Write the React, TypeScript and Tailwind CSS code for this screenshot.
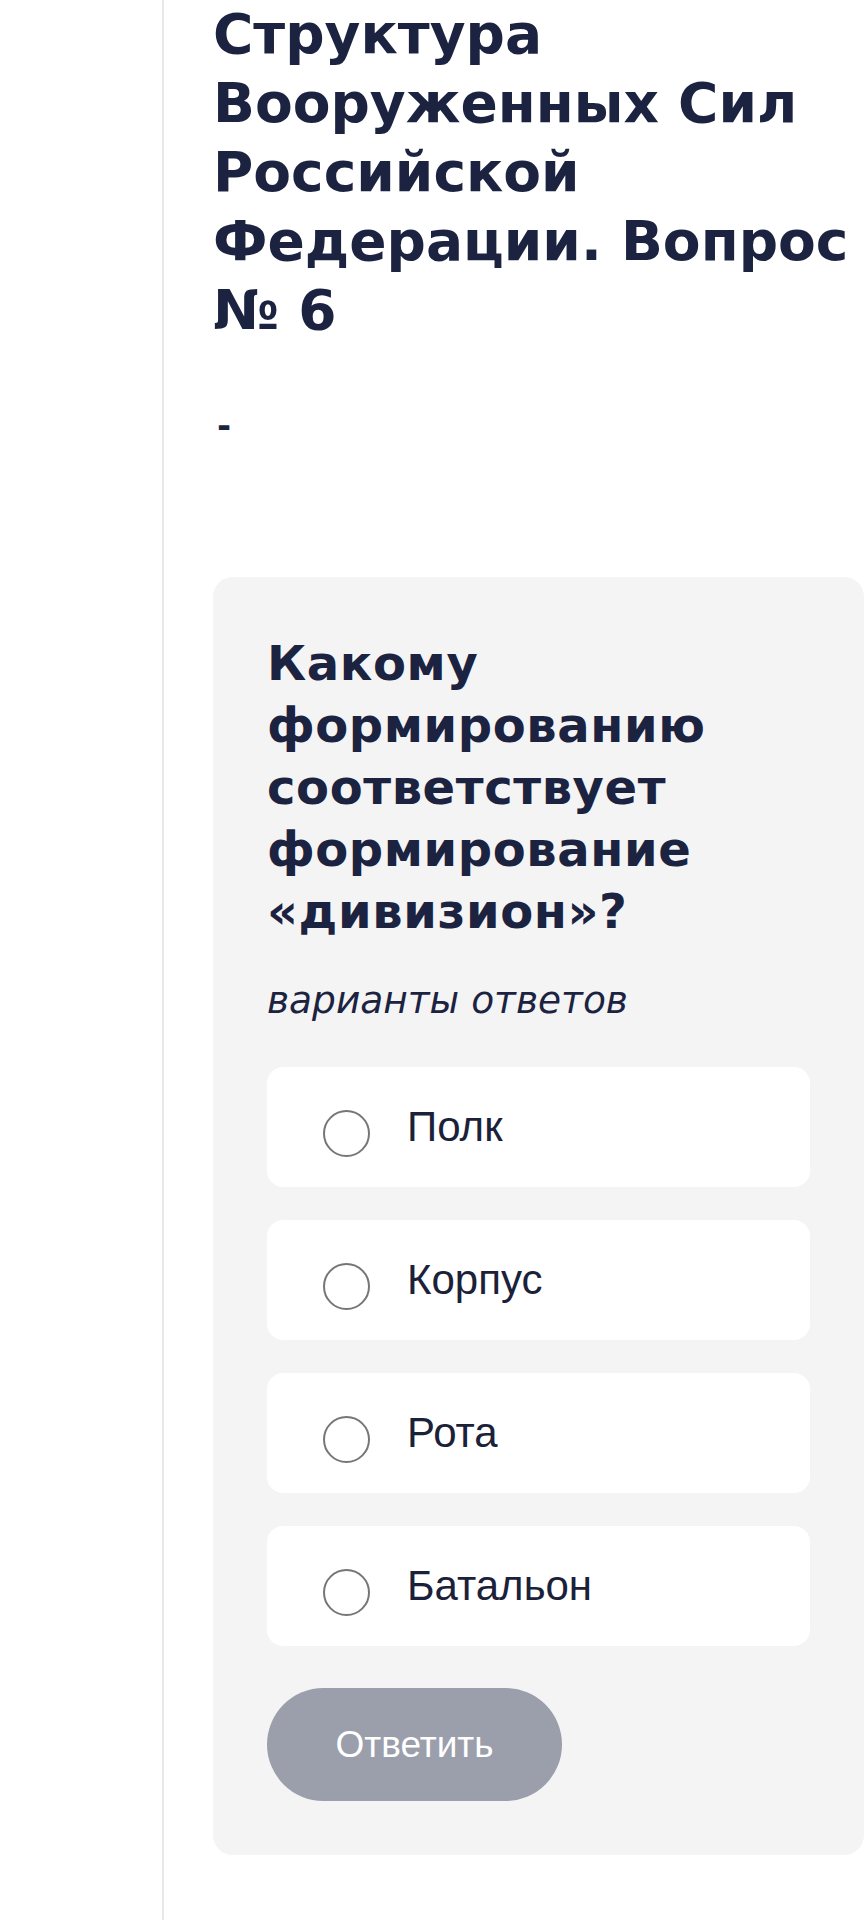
import React from 'react';

const options = ['Полк', 'Корпус', 'Рота', 'Батальон'];

// Radio-like answer row
const Option = ({ label }: { label: string }) => {
  return (
    <label className="flex items-center h-[120px] bg-white rounded-[16px] pl-[56px] cursor-pointer">
      <span className="w-[47px] h-[47px] mt-[12px] rounded-full border-2 border-[#767676] shrink-0" />
      <span
        className="ml-[37px] text-[42px] leading-none text-[#1b2138]"
        style={{ fontFamily: '"Liberation Sans", Arial, sans-serif' }}
      >
        {label}
      </span>
    </label>
  );
};

const App = () => {
  return (
    <div className="min-h-screen bg-white flex">
      <div className="w-[162px] shrink-0" />
      <div className="flex-1 border-l-2 border-[#e8e8e8] pl-[49px]">
        <h1
          className="text-[55px] leading-[69px] font-bold text-[#1b2340]"
          style={{ fontFamily: '"DejaVu Sans", sans-serif' }}
        >
          Структура Вооруженных Сил Российской Федерации. Вопрос № 6
        </h1>

        <p
          className="mt-[60px] pl-[4px] text-[34px] leading-[40px] font-bold text-[#1b2340]"
          style={{ fontFamily: '"DejaVu Sans", sans-serif' }}
        >
          -
        </p>

        <div className="mt-[132px] bg-[#f4f4f4] rounded-[20px] pt-[55px] px-[54px] pb-[54px]">
          <h2
            className="text-[48px] leading-[62px] font-bold tracking-[0.6px] text-[#1b2340]"
            style={{ fontFamily: '"DejaVu Sans", sans-serif' }}
          >
            Какому формированию соответствует формирование «дивизион»?
          </h2>

          <p
            className="mt-[35px] text-[37.5px] leading-[46px] italic text-[#1b2340]"
            style={{ fontFamily: '"DejaVu Sans", sans-serif' }}
          >
            варианты ответов
          </p>

          <div className="mt-[44px] flex flex-col gap-[33px]">
            {options.map((o) => (
              <Option key={o} label={o} />
            ))}
          </div>

          <button
            className="mt-[42px] w-[295px] h-[113px] rounded-full bg-[#9b9eab] text-white text-[37px]"
            style={{ fontFamily: '"Liberation Sans", Arial, sans-serif' }}
          >
            Ответить
          </button>
        </div>
      </div>
    </div>
  );
};

export default App;
